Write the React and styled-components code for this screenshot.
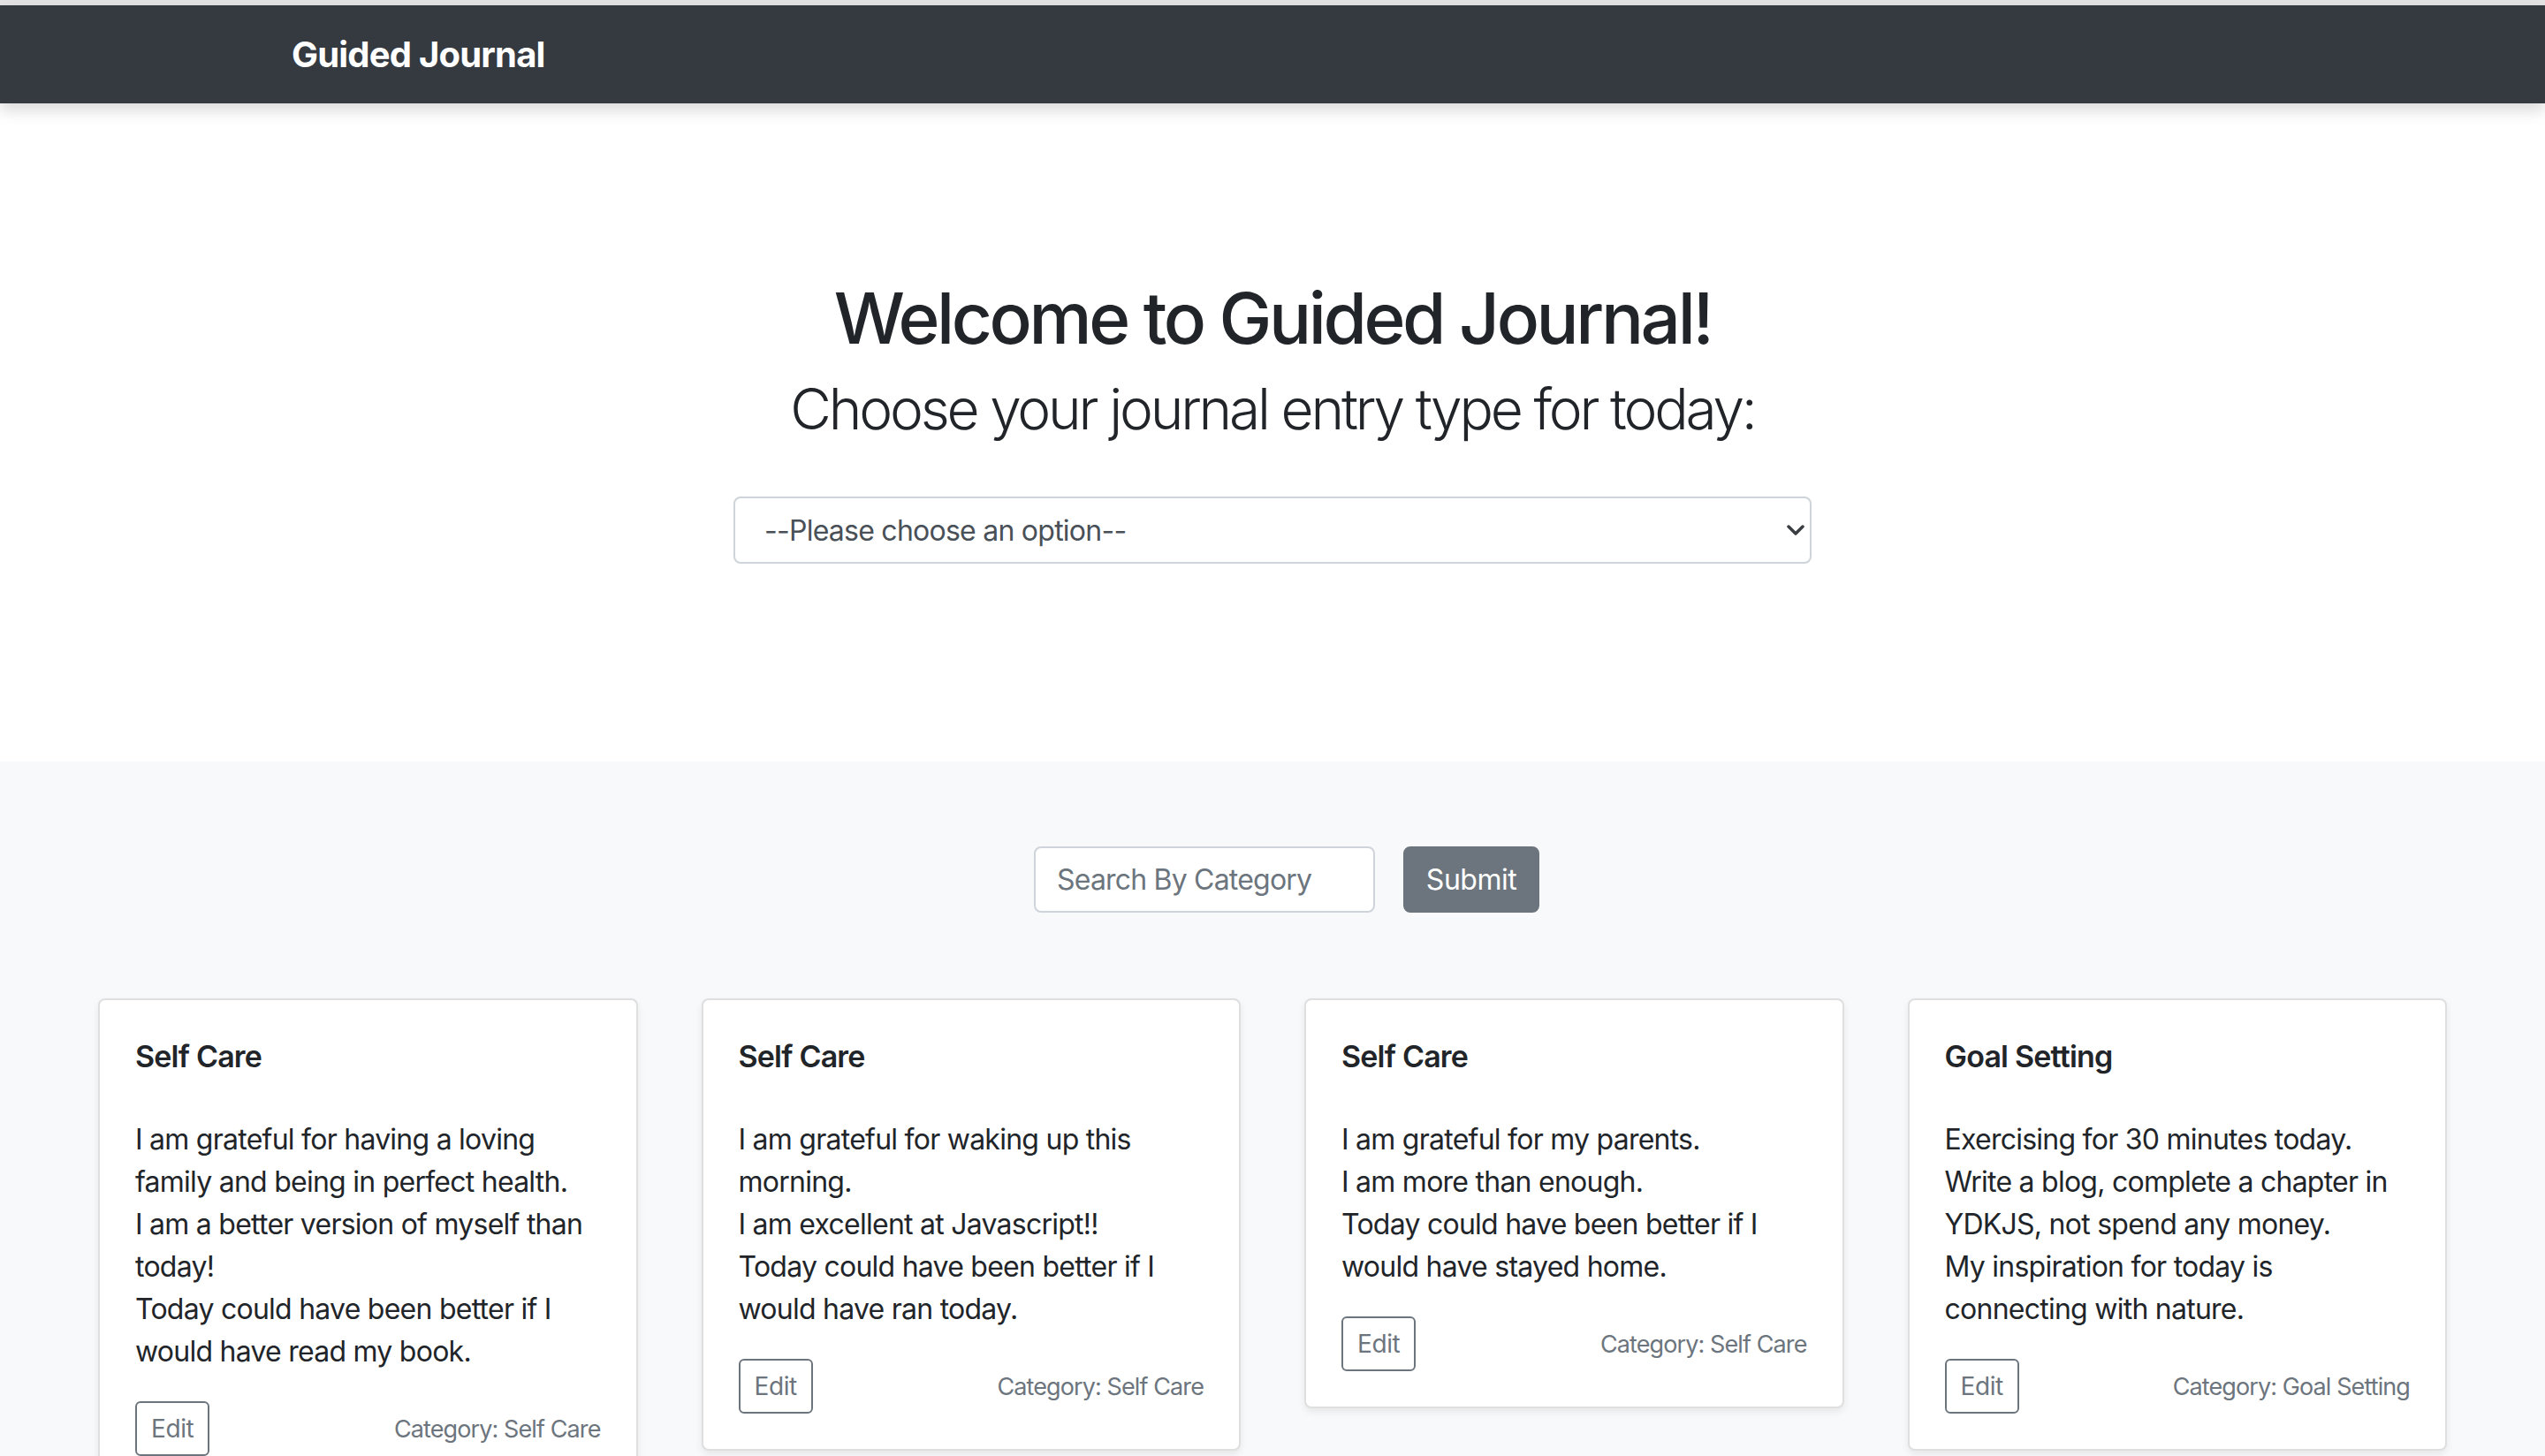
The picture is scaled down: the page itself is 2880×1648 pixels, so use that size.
import React from 'react';
import styled, { createGlobalStyle } from 'styled-components';

const GlobalStyle = createGlobalStyle`
  html, body { margin: 0; padding: 0; }
  body {
    font-family: Inter, "Noto Sans", "Liberation Sans", sans-serif;
    color: #212529;
    background: #f8f9fa;
  }
  * { box-sizing: border-box; }
`;

const Page = styled.div`
  min-height: 100vh;
  display: flex;
  flex-direction: column;
`;

const TopStrip = styled.div`
  height: 6px;
  background: #e3e3e3;
`;

const NavBar = styled.nav`
  height: 111px;
  background: #343a40;
  display: flex;
  align-items: center;
  padding-left: 330px;
  box-shadow: 0 8px 16px rgba(0, 0, 0, 0.15);
  position: relative;
  z-index: 1;
`;

const Brand = styled.a`
  color: #fff;
  font-size: 40px;
  font-weight: 700;
  letter-spacing: -0.8px;
  text-decoration: none;
  line-height: 1.5;
`;

const Hero = styled.section`
  background: #fff;
  height: 745px;
  padding-top: 195px;
  display: flex;
  flex-direction: column;
  align-items: center;
  text-align: center;
`;

const Title = styled.h1`
  margin: 0 0 16px;
  font-size: 80px;
  font-weight: 500;
  line-height: 96px;
  letter-spacing: -3.4px;
  color: #212529;
`;

const Subtitle = styled.h2`
  margin: 0 0 61px;
  font-size: 64px;
  font-weight: 300;
  line-height: 77px;
  letter-spacing: -3.2px;
  color: #212529;
`;

const SelectWrap = styled.div`
  position: relative;
  width: 1220px;
`;

const Select = styled.select`
  width: 100%;
  height: 76px;
  border: 2px solid #ced4da;
  border-radius: 8px;
  background: #fff;
  padding: 0 60px 0 33px;
  font-family: inherit;
  font-size: 32px;
  letter-spacing: -0.75px;
  color: #495057;
  appearance: none;
  -webkit-appearance: none;
  outline: none;
`;

const Chevron = styled.svg`
  position: absolute;
  right: 8px;
  top: 50%;
  transform: translateY(-50%);
  pointer-events: none;
`;

const Entries = styled.section`
  flex: 1;
  background: #f8f9fa;
  padding: 96px 111px 60px;
`;

const SearchForm = styled.form`
  display: flex;
  justify-content: center;
  gap: 32px;
  padding-left: 32px;
  margin-bottom: 97px;
`;

const SearchInput = styled.input`
  width: 386px;
  height: 75px;
  border: 2px solid #ced4da;
  border-radius: 8px;
  background: #fff;
  padding: 0 24px;
  font-family: inherit;
  font-size: 32px;
  letter-spacing: -0.8px;
  color: #495057;
  outline: none;
  &::placeholder { color: #6c757d; }
`;

const SubmitButton = styled.button`
  width: 154px;
  height: 75px;
  border: 2px solid #6c757d;
  border-radius: 8px;
  background: #6c757d;
  color: #fff;
  font-family: inherit;
  font-size: 32px;
  letter-spacing: -0.5px;
  padding: 0;
`;

const CardGrid = styled.div`
  display: grid;
  grid-template-columns: repeat(4, minmax(0, 1fr));
  gap: 72px;
  align-items: start;
`;

const Card = styled.article`
  min-width: 0;
  background: #fff;
  border: 2px solid rgba(0, 0, 0, 0.125);
  border-radius: 8px;
  padding: 40px;
  box-shadow: 0 4px 8px rgba(0, 0, 0, 0.075);
`;

const CardTitle = styled.h5`
  margin: 0 0 46px;
  font-size: 34px;
  font-weight: 600;
  line-height: 48px;
  letter-spacing: -0.8px;
  color: #212529;
`;

const CardText = styled.p`
  margin: 0 0 32px;
  font-size: 32px;
  line-height: 48px;
  letter-spacing: -0.75px;
  white-space: nowrap;
  color: #212529;
`;

const CardFooter = styled.div`
  display: flex;
  justify-content: space-between;
  align-items: center;
`;

const EditButton = styled.button`
  height: 62px;
  padding: 0 16px;
  border: 2px solid #6c757d;
  border-radius: 6px;
  background: transparent;
  color: #6c757d;
  font-family: inherit;
  font-size: 28px;
  letter-spacing: -0.4px;
`;

const Category = styled.small`
  font-size: 27px;
  letter-spacing: -0.9px;
  color: #6c757d;
`;

const entries = [
  {
    title: 'Self Care',
    lines: [
      'I am grateful for having a loving',
      'family and being in perfect health.',
      'I am a better version of myself than',
      'today!',
      'Today could have been better if I',
      'would have read my book.',
    ],
    category: 'Self Care',
  },
  {
    title: 'Self Care',
    lines: [
      'I am grateful for waking up this',
      'morning.',
      'I am excellent at Javascript!!',
      'Today could have been better if I',
      'would have ran today.',
    ],
    category: 'Self Care',
  },
  {
    title: 'Self Care',
    lines: [
      'I am grateful for my parents.',
      'I am more than enough.',
      'Today could have been better if I',
      'would have stayed home.',
    ],
    category: 'Self Care',
  },
  {
    title: 'Goal Setting',
    lines: [
      'Exercising for 30 minutes today.',
      'Write a blog, complete a chapter in',
      'YDKJS, not spend any money.',
      'My inspiration for today is',
      'connecting with nature.',
    ],
    category: 'Goal Setting',
  },
];

export default function App() {
  return (
    <Page>
      <GlobalStyle />
      <TopStrip />
      <NavBar>
        <Brand href="#">Guided Journal</Brand>
      </NavBar>
      <Hero>
        <Title>Welcome to Guided Journal!</Title>
        <Subtitle>Choose your journal entry type for today:</Subtitle>
        <SelectWrap>
          <Select defaultValue="">
            <option value="">--Please choose an option--</option>
            <option value="self-care">Self Care</option>
            <option value="goal-setting">Goal Setting</option>
          </Select>
          <Chevron width="20" height="12" viewBox="0 0 20 12">
            <path d="M2 2 L10 10 L18 2" fill="none" stroke="#3a3e43" strokeWidth="3.5" strokeLinecap="round" strokeLinejoin="round" />
          </Chevron>
        </SelectWrap>
      </Hero>
      <Entries>
        <SearchForm onSubmit={(e) => e.preventDefault()}>
          <SearchInput placeholder="Search By Category" />
          <SubmitButton type="submit">Submit</SubmitButton>
        </SearchForm>
        <CardGrid>
          {entries.map((entry, i) => (
            <Card key={i}>
              <CardTitle>{entry.title}</CardTitle>
              <CardText>
                {entry.lines.map((line, j) => (
                  <React.Fragment key={j}>
                    {line}
                    {j < entry.lines.length - 1 && <br />}
                  </React.Fragment>
                ))}
              </CardText>
              <CardFooter>
                <EditButton type="button">Edit</EditButton>
                <Category>Category: {entry.category}</Category>
              </CardFooter>
            </Card>
          ))}
        </CardGrid>
      </Entries>
    </Page>
  );
}
